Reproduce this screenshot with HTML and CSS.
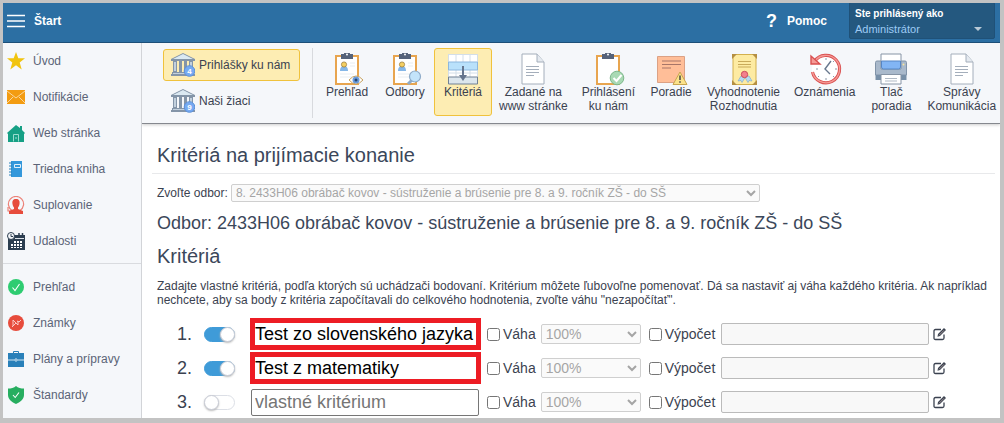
FILE: index.html
```
<!DOCTYPE html>
<html lang="sk">
<head>
<meta charset="utf-8">
<title>Kritériá na prijímacie konanie</title>
<link rel="stylesheet" href="styles.css">
</head>
<body>

<svg class="defs" aria-hidden="true">
  <symbol id="bank" viewBox="0 0 24 24">
    <path d="M0 6 12 0l12 6v2H0z" fill="#8495a8"/>
    <path d="M2 6 12 1l10 5z" fill="#dbe9f2"/>
    <path d="M2 8h4v11H2zM8 8h3v11H8zM13 8h3v11h-3zM18 8h4v11h-4z" fill="#8495a8"/>
    <path d="M3 9h2v9H3zM19 9h2v9h-2z" fill="#c2d0dd"/>
    <path d="M1 19h22v2h1v2H0v-2h1z" fill="#8495a8"/>
    <path d="M2 20h20v1H2z" fill="#c2d0dd"/>
    <circle cx="18.500" cy="18" r="5.300" fill="#76aaf2" stroke="#5c90d8"/>
  </symbol>
  <symbol id="clipboard" viewBox="0 0 32 32">
    <path d="M4 2h24v30H4z" fill="#e8a54f"/>
    <path d="M6 4h20v26H6z" fill="#fff"/>
    <path d="M10 1h3a3 3 0 0 1 6 0h3v5H10z" fill="#56637a"/>
    <circle cx="16" cy="1.500" r="1" fill="#fff"/>
  </symbol>
  <symbol id="person" viewBox="0 0 32 32">
    <path d="M9 18c0-4 2-5 4-5s4 1 4 5z" fill="#85b7e8"/>
    <circle cx="13" cy="11.500" r="2.600" fill="#f4cf62" stroke="#927433" stroke-width=".7"/>
    <path d="M19 10h5M19 13h5M9 21h14M9 24h12" stroke="#e8edf1"/>
  </symbol>
  <symbol id="page" viewBox="0 0 32 32">
    <path d="M5 1h15l7 8v22H5z" fill="#fff" stroke="#a4aebb"/>
    <path d="M20 1v8h7" fill="#e5eaf0" stroke="#a4aebb"/>
    <path d="M9 13.500h13M9 16.500h13M9 19.500h13M9 22.500h8" stroke="#a4aebb"/>
  </symbol>
  <symbol id="edit" viewBox="0 0 14 14">
    <path d="M11 7.500V11q0 1.500-1.500 1.500H2.500Q1 12.500 1 11V4q0-1.500 1.500-1.500H8" fill="none" stroke="#3b4250" stroke-width="1.300"/>
    <path d="m5 7 6-6 2 2-6 6-2.500.7z" fill="#3b4250"/>
    <path d="m6 8.300 5-5" stroke="#c6b1ae" stroke-width=".7"/>
  </symbol>
</svg>

<div class="app">
  <header class="topbar">
    <button class="menu-button" type="button">
      <svg width="18" height="14" viewBox="0 0 18 14"><path d="M0 1.500h18M0 7h18M0 12.500h18" stroke="#fff" stroke-width="1.500"/></svg>
      Štart
    </button>
    <a class="help" href="#"><span class="help-mark">?</span>Pomoc</a>
    <button class="user" type="button">
      <span class="user-title">Ste prihlásený ako</span>
      <span class="user-name">Administrátor <i class="caret"></i></span>
    </button>
  </header>

  <div class="main">
    <nav class="sidebar">
      <a href="#"><svg viewBox="0 0 18 18"><path d="m9 0 2.300 6.300H18l-5.300 4.200 2 6.900L9 13.300l-5.700 4.100 2-6.900L0 6.300h6.700z" fill="#f1c40f"/></svg>Úvod</a>
      <a href="#"><svg viewBox="0 0 18 18"><path d="M0 2h18v14H0z" fill="#f39c12"/><path d="m0 3 9 7 9-7M0 15l6-6M18 15l-6-6" fill="none" stroke="#fbdcae" stroke-width=".9"/></svg>Notifikácie</a>
      <a href="#"><svg viewBox="0 0 18 18"><path d="m9 1 4 3V2h2v4l3 3-1 1v8H1v-8L0 9z" fill="#16a085"/><path d="M6.500 17.500v-7h5v7M9 13v2" fill="none" stroke="#9adccf"/></svg>Web stránka</a>
      <a href="#"><svg viewBox="0 0 18 18"><path d="M4 1h11v16H4z" fill="#3498db"/><path d="M7.500 4.500h6v3h-6z" fill="#3498db" stroke="#e3f1fa"/><path d="M2 3h3M2 6h3M2 9h3M2 12h3M2 15h3" stroke="#2980b9"/></svg>Triedna kniha</a>
      <a href="#"><svg viewBox="0 0 18 18"><path d="M5 14.500A7.600 7.600 0 1 1 13 14.500M1 11v4h4" fill="none" stroke="#ec8278" stroke-width="1.200"/><path d="M9 3c3 0 4 2 3.500 5-.3 2-1 3-1.500 3.500V13l5 2v3H2v-3l5-2v-1.500C6.500 11 5.800 10 5.500 8 5 5 6 3 9 3z" fill="#e74c3c"/></svg>Suplovanie</a>
      <a href="#"><svg viewBox="0 0 18 18"><path d="M1 3h17v15H1z" fill="#2c3e50"/><path d="M12 1v3M15.500 1v3" stroke="#2c3e50" stroke-width="1.500"/><circle cx="4" cy="4" r="3.500" fill="#f5f7fa" stroke="#2c3e50"/><path d="M4 2v2.500h2" fill="none" stroke="#2c3e50"/><path d="M8 6.500h9" stroke="#dce2e8"/><path d="M7 9h2v2H7zM10 9h2v2h-2zM13 9h2v2h-2zM4 12h2v2H4zM7 12h2v2H7zM10 12h2v2h-2zM13 12h2v2h-2zM4 15h2v1H4zM7 15h2v1H7zM10 15h2v1h-2zM13 15h2v1h-2z" fill="#fff"/></svg>Udalosti</a>
      <hr>
      <a href="#"><svg viewBox="0 0 18 18"><circle cx="9" cy="9" r="8" fill="#2ecc71"/><path d="m5.500 9.500 2.500 3 4.500-6.500" fill="none" stroke="#fff" stroke-width="1.100"/></svg>Prehľad</a>
      <a href="#"><svg viewBox="0 0 18 18"><circle cx="9" cy="9" r="8" fill="#e74c3c"/><path d="M6 12V6l5 5V7M5 13l4-4M10 7l2 1 2-2" fill="none" stroke="#fbd6d2" stroke-width=".9"/></svg>Známky</a>
      <a href="#"><svg viewBox="0 0 18 18"><path d="M1 3h16v14H1z" fill="#2980b9"/><path d="M6.500 3V1.500h5V3" fill="none" stroke="#2980b9"/><path d="M1 10h6.500M10.500 10H17" stroke="#d3e6f2"/><circle cx="9" cy="10" r="1.200" fill="none" stroke="#d3e6f2"/></svg>Plány a prípravy</a>
      <a href="#"><svg viewBox="0 0 18 18"><path d="M9 0c2 2 5 2.500 8 2.500V9c0 4-4 7.500-8 9-4-1.500-8-5-8-9V2.500C4 2.500 7 2 9 0z" fill="#27ae60"/><path d="m6 9 2.200 2.500L12 6.500" fill="none" stroke="#fff" stroke-width="1.100"/></svg>Štandardy</a>
    </nav>

    <div class="page">
      <div class="ribbon">
        <div class="ribbon-views">
          <button class="view active" type="button">
            <svg width="24" height="24"><use href="#bank"/><text x="18.500" y="21" class="badge">4</text></svg>
            Prihlášky ku nám
          </button>
          <button class="view" type="button">
            <svg width="24" height="24"><use href="#bank"/><text x="18.500" y="21" class="badge">9</text></svg>
            Naši žiaci
          </button>
        </div>
        <div class="ribbon-tools">
          <button class="tool" type="button">
            <svg viewBox="0 0 32 32"><use href="#clipboard"/><use href="#person"/><path d="M18 27q7-8 14 0-7 8-14 0z" fill="#fff" stroke="#c6a05c"/><circle cx="25" cy="27" r="3.500" fill="#6a9bdc"/><circle cx="25" cy="27" r="1.500" fill="#28476f"/></svg>
            Prehľad
          </button>
          <button class="tool" type="button">
            <svg viewBox="0 0 32 32"><use href="#clipboard"/><use href="#person"/><path d="m19 31 4-4" stroke="#8eabc8" stroke-width="3"/><circle cx="26" cy="23.500" r="5.500" fill="#c3e4fa" stroke="#8eabc8" stroke-width="1.200"/></svg>
            Odbory
          </button>
          <button class="tool active" type="button">
            <svg viewBox="0 0 32 32"><path d="M1 1h30v30H1z" fill="#fff"/><path d="M1.500 1v30M9 1v30M16 1v30M23 1v30M30.500 1v30M1 1.500h30M1 20h30" fill="none" stroke="#d3dee8"/><path d="M1.500 9h29v8h-29z" fill="#b9e1fb" stroke="#8cb7de"/><path d="M1.500 24h29v7h-29z" fill="#dce6ed" stroke="#718195"/><path d="M16 13v10" stroke="#66758d" stroke-width="2"/><path d="M12 22h8l-4 6z" fill="#66758d"/></svg>
            Kritériá
          </button>
          <button class="tool" type="button">
            <svg viewBox="0 0 32 32"><use href="#page"/></svg>
            Zadané na<br>www stránke
          </button>
          <button class="tool" type="button">
            <svg viewBox="0 0 32 32"><use href="#clipboard"/><circle cx="25" cy="25" r="6.800" fill="#a9d9b4" stroke="#7db78b"/><path d="m21.500 25 3 3 5-6" fill="none" stroke="#fff" stroke-width="2"/></svg>
            Prihlásení<br>ku nám
          </button>
          <button class="tool" type="button">
            <svg viewBox="0 0 32 32"><path d="M2.500 3.500h27v26h-27z" fill="#ffbe98" stroke="#dca184"/><path d="M7 8h19M7 11.500h19M7 15h9" stroke="#a77568" stroke-width="1.200"/><path d="m25 19 7 12.500H18z" fill="#fbe28b" stroke="#c9a64f"/><path d="M25 22.500v4.500M25 28.300v1.500" stroke="#454545" stroke-width="1.500"/></svg>
            Poradie
          </button>
          <button class="tool" type="button">
            <svg viewBox="0 0 32 32"><path d="M5 1.500h23v30H5z" fill="#fdeba2" stroke="#d3b04d"/><path d="M4 1h5L4 6zM29 1v5l-5-5zM4 32v-5l5 5zM29 32h-5l5-5z" fill="#b58f42"/><path d="M10 8.500h13M10 11.500h13M10 14h13" stroke="#c9aa59"/><path d="m13 23-3 5 3-.5 1 2 3-5 3 5 1-2 3 .5-3-5z" fill="#b6dbf2" stroke="#7aa5ca" stroke-width=".6"/><circle cx="16.500" cy="21.500" r="3.200" fill="#f3808c" stroke="#cc4e5c"/></svg>
            Vyhodnotenie<br>Rozhodnutia
          </button>
          <button class="tool" type="button">
            <svg viewBox="0 0 32 32"><circle cx="17" cy="16" r="14" fill="#fff"/><path d="M5.500 8.500A13.700 13.700 0 1 1 3.500 19" fill="none" stroke="#d95050" stroke-width="3.200"/><path d="M5.500 8.500A13.700 13.700 0 1 1 3.500 19" fill="none" stroke="#f59a96" stroke-width="1.400"/><path d="M2 3v8h9z" fill="#f59a96" stroke="#d95050" stroke-width="1.400"/><path d="m22 8-6 8 5 5" fill="none" stroke="#68788d" stroke-width="1.400"/><path d="M17 5v2M17 25v2M26 16h2M7 16h2M24 9l1-1M24 23l1 1M10 23l-1 1" stroke="#8c98a8"/></svg>
            Oznámenia
          </button>
          <button class="tool" type="button">
            <svg viewBox="0 0 32 32"><path d="M6 1h20v12H6z" fill="#fff" stroke="#8694a5"/><path d="M2 8h4v8h20V8h4q1.500 0 1.500 1.500V22H.5V9.500Q.5 8 2 8z" fill="#a9b9cb" stroke="#8093a8"/><path d="M6.500 8h19v6q0 2-2 2h-15q-2 0-2-2z" fill="#82b5f4" stroke="#5686c4"/><path d="M.5 22h31v5h-31z" fill="#7890a8"/><path d="M6 21.500h20v9.500H6z" fill="#fff" stroke="#8694a5"/><path d="M10 25.500h12M10 28h12" stroke="#b1bac5"/><circle cx="28.500" cy="11.500" r="1" fill="#f8e79e"/></svg>
            Tlač<br>poradia
          </button>
          <button class="tool" type="button">
            <svg viewBox="0 0 32 32"><use href="#page"/></svg>
            Správy<br>Komunikácia
          </button>
        </div>
      </div>

      <main class="content">
        <h1>Kritériá na prijímacie konanie</h1>
        <div class="field">
          <label for="odbor">Zvoľte odbor:</label>
          <select id="odbor" disabled>
            <option>8. 2433H06 obrábač kovov - sústruženie a brúsenie pre 8. a 9. ročník ZŠ - do SŠ</option>
          </select>
        </div>
        <h2 class="odbor-name">Odbor: 2433H06 obrábač kovov - sústruženie a brúsenie pre 8. a 9. ročník ZŠ - do SŠ</h2>
        <h2>Kritériá</h2>
        <p>Zadajte vlastné kritériá, podľa ktorých sú uchádzači bodovaní. Kritérium môžete ľubovoľne pomenovať. Dá sa nastaviť aj váha každého kritéria. Ak napríklad nechcete, aby sa body z kritéria započítavali do celkového hodnotenia, zvoľte váhu "nezapočítať".</p>

        <div class="criteria">
          <div class="criterion">
            <label class="number" for="on1">1.</label>
            <input class="toggle" id="on1" type="checkbox" checked>
            <div class="name"><input class="marked" type="text" value="Test zo slovenského jazyka" aria-label="Názov kritéria 1"></div>
            <label class="check"><input type="checkbox">Váha</label>
            <select class="weight" aria-label="Váha kritéria 1" disabled><option>100%</option></select>
            <label class="check"><input type="checkbox">Výpočet</label>
            <input class="formula" type="text" aria-label="Výpočet kritéria 1" disabled>
            <button class="edit" type="button" aria-label="Upraviť"><svg width="14" height="14"><use href="#edit"/></svg></button>
          </div>
          <div class="criterion">
            <label class="number" for="on2">2.</label>
            <input class="toggle" id="on2" type="checkbox" checked>
            <div class="name"><input class="marked" type="text" value="Test z matematiky" aria-label="Názov kritéria 2"></div>
            <label class="check"><input type="checkbox">Váha</label>
            <select class="weight" aria-label="Váha kritéria 2" disabled><option>100%</option></select>
            <label class="check"><input type="checkbox">Výpočet</label>
            <input class="formula" type="text" aria-label="Výpočet kritéria 2" disabled>
            <button class="edit" type="button" aria-label="Upraviť"><svg width="14" height="14"><use href="#edit"/></svg></button>
          </div>
          <div class="criterion">
            <label class="number" for="on3">3.</label>
            <input class="toggle" id="on3" type="checkbox">
            <div class="name"><input type="text" placeholder="vlastné kritérium" aria-label="Názov kritéria 3"></div>
            <label class="check"><input type="checkbox">Váha</label>
            <select class="weight" aria-label="Váha kritéria 3" disabled><option>100%</option></select>
            <label class="check"><input type="checkbox">Výpočet</label>
            <input class="formula" type="text" aria-label="Výpočet kritéria 3" disabled>
            <button class="edit" type="button" aria-label="Upraviť"><svg width="14" height="14"><use href="#edit"/></svg></button>
          </div>
        </div>
      </main>
    </div>
  </div>
</div>

</body>
</html>
```
FILE: styles.css
```
*,
*::before {
  box-sizing: border-box;
}

body {
  margin: 0;
  height: 100vh;
  padding: 3px 4px 5px 3px;
  background: #c3c3c3;
  color: #3b4250;
  font: 12px/14px "Liberation Sans", Arial, sans-serif;
}

button,
input,
select {
  margin: 0;
  font-family: inherit;
}

button {
  padding: 0;
  border: 0;
  background: none;
  color: inherit;
  font-size: 12px;
  line-height: 14px;
  cursor: pointer;
}

a {
  color: inherit;
  text-decoration: none;
}

.defs {
  position: absolute;
  width: 0;
  height: 0;
}

.app {
  display: flex;
  flex-direction: column;
  height: 100%;
  overflow: hidden;
  background: #fff;
}

/* top bar */
.topbar {
  display: flex;
  flex: none;
  align-items: center;
  height: 40px;
  padding: 0 5px 4px 4px;
  background: #2c6fa3;
  border-bottom: 1px solid #1d4f78;
  color: #fff;
}

.menu-button {
  display: flex;
  align-items: center;
  gap: 9px;
  font-weight: bold;
}

.help {
  display: flex;
  align-items: center;
  gap: 10px;
  margin-left: auto;
  margin-right: 22px;
  font-weight: bold;
}

.help-mark {
  font-size: 18px;
}

.user {
  display: flex;
  flex-direction: column;
  gap: 1px;
  width: 146px;
  padding: 4px 5px 2px;
  background: #24587f;
  border: 1px solid #1f5178;
  border-radius: 2px;
  text-align: left;
  font-size: 11px;
}

.user-title {
  font-size: 10px;
  font-weight: bold;
}

.user-name {
  display: flex;
  align-items: center;
  justify-content: space-between;
  color: #9ecbf5;
}

.caret {
  border: 4px solid transparent;
  border-top-color: #b9c9d6;
  border-bottom: 0;
  margin-right: 7px;
}

.main {
  display: flex;
  flex: 1;
  min-height: 0;
}

/* left menu */
.sidebar {
  flex: none;
  width: 139px;
  background: #f5f7fa;
  border-right: 1px solid #d2d4d8;
  color: #5b6477;
}

.sidebar a {
  display: flex;
  align-items: center;
  gap: 8px;
  height: 36px;
  padding-left: 4px;
}

.sidebar svg {
  width: 18px;
  height: 18px;
}

.sidebar hr {
  margin: 4px 0 5px;
  border: 0;
  border-top: 1px solid #d9dbdf;
}

.page {
  flex: 1;
  min-width: 0;
  overflow: hidden;
}

/* ribbon */
.ribbon {
  display: flex;
  height: 81px;
  padding-top: 5px;
  background: #f5f7fa;
  border-bottom: 1px solid #85888e;
  box-shadow: 0 1px 3px #ccc;
}

.ribbon-views {
  display: flex;
  flex: none;
  flex-direction: column;
  gap: 4px;
  height: 70px;
  padding: 1px 12px 0 21px;
  border-right: 1px solid #d8dade;
}

.view {
  display: flex;
  align-items: center;
  gap: 4px;
  width: 137px;
  height: 32px;
  padding: 0 7px;
  border: 1px solid transparent;
  border-radius: 3px;
  white-space: nowrap;
}

.view svg {
  flex: none;
}

.badge {
  fill: #fff;
  font-size: 8px;
  font-weight: bold;
  text-anchor: middle;
}

.ribbon-tools {
  display: flex;
  padding-left: 5px;
}

.tool {
  display: flex;
  flex: none;
  flex-direction: column;
  align-items: center;
  min-width: 58px;
  height: 68px;
  padding: 4px 6px 0;
  border: 1px solid transparent;
  border-radius: 3px;
  white-space: nowrap;
}

.tool svg {
  width: 32px;
  height: 32px;
  overflow: visible;
}

.view.active,
.tool.active {
  background: #fdedb3;
  border-color: #f0c23c;
}

/* content */
.content {
  padding: 19px 5px 0 10px;
}

h1,
h2 {
  margin: 0;
  padding-left: 5px;
  color: #3b475a;
  font-size: 20px;
  font-weight: normal;
  line-height: 24px;
}

h1 {
  padding-bottom: 6px;
  border-bottom: 1px solid #e8e9eb;
}

.field {
  display: flex;
  align-items: center;
  gap: 3px;
  padding: 10px 0 9px 5px;
}

select:disabled,
.formula:disabled {
  border: 1px solid #bbb;
  border-radius: 2px;
  background: #f8f8f8;
}

.field select {
  width: 529px;
  height: 18px;
  font-size: 12px;
}

.odbor-name {
  font-size: 18px;
}

.odbor-name + h2 {
  margin-top: 9px;
}

p {
  margin: 11px 0 10px;
  padding-left: 5px;
}

.criterion {
  display: flex;
  align-items: center;
  height: 34px;
}

.number {
  width: 40px;
  margin-right: 12px;
  text-align: right;
  font-size: 18px;
}

.toggle {
  appearance: none;
  flex: none;
  width: 31px;
  height: 15px;
  margin-right: 15px;
  border: 1px solid #dcdfe6;
  border-radius: 8px;
  background: #fff;
}

.toggle::before {
  content: "";
  display: block;
  width: 15px;
  height: 15px;
  margin: -1px;
  border: 1px solid #c9ccd6;
  border-radius: 50%;
  background: #fff;
  box-shadow: 0 1px 2px #bbb;
}

.toggle:checked {
  background: #3f9bd8;
  border-color: #3f9bd8;
}

.toggle:checked::before {
  margin-left: 15px;
}

.name {
  width: 237px;
}

.name input {
  width: 228px;
  height: 27px;
  margin-left: 1px;
  padding: 0 3px;
  border: 1px solid #767676;
  border-radius: 2px;
  color: #000;
  font-size: 18px;
}

.name input::placeholder {
  color: #757575;
}

.name .marked {
  width: 231px;
  height: 32px;
  margin-left: 0;
  padding: 0;
  border: 5px solid #ed1c24;
  border-radius: 0;
}

.check {
  display: flex;
  align-items: center;
  gap: 3px;
  font-size: 14px;
}

.check input {
  width: 13px;
  height: 13px;
}

.weight {
  width: 100px;
  height: 20px;
  margin: 0 8px 0 5px;
  font-size: 14px;
}

.formula {
  width: 208px;
  height: 22px;
  margin: 0 4px 0 6px;
}

.edit {
  height: 14px;
}
```
